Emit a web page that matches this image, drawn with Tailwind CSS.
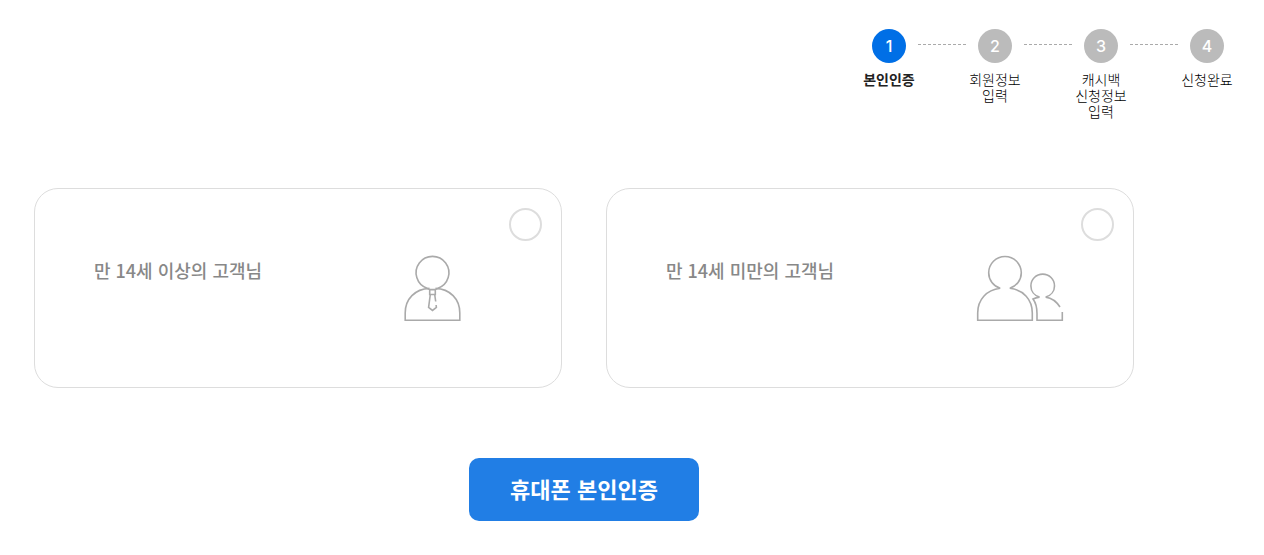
<!DOCTYPE html>
<html lang="ko">
<head>
<meta charset="utf-8">
<meta name="viewport" content="width=device-width, initial-scale=1">
<title>본인인증</title>
<script src="https://cdn.jsdelivr.net/npm/@tailwindcss/browser@4"></script>
</head>
<body class="bg-white font-['Noto_Sans_CJK_KR',sans-serif] text-[#222]">
<header class="flex justify-end pt-[29px] pr-1">
  <ol class="flex min-h-[95px] text-center text-sm leading-4 font-light text-black">
    <li class="relative flex w-[106px] flex-col items-center gap-2 font-bold" aria-current="step">
      <span class="flex size-[34px] items-center justify-center rounded-full bg-[#006fe6] font-['Inter',sans-serif] text-base font-medium text-white">1</span>
      <span class="text-[#222]">본인인증</span>
      <svg class="absolute top-[15px] left-[82px]" width="50" height="1" aria-hidden="true"><path d="M0 .5H50" stroke="#aaa" stroke-dasharray="3 2"/></svg>
    </li>
    <li class="relative flex w-[106px] flex-col items-center gap-2">
      <span class="flex size-[34px] items-center justify-center rounded-full bg-[#bbb] font-['Inter',sans-serif] text-base font-medium text-white">2</span>
      <span>회원정보<br>입력</span>
      <svg class="absolute top-[15px] left-[82px]" width="50" height="1" aria-hidden="true"><path d="M0 .5H50" stroke="#aaa" stroke-dasharray="3 2"/></svg>
    </li>
    <li class="relative flex w-[106px] flex-col items-center gap-2">
      <span class="flex size-[34px] items-center justify-center rounded-full bg-[#bbb] font-['Inter',sans-serif] text-base font-medium text-white">3</span>
      <span>캐시백<br>신청정보<br>입력</span>
      <svg class="absolute top-[15px] left-[82px]" width="50" height="1" aria-hidden="true"><path d="M0 .5H50" stroke="#aaa" stroke-dasharray="3 2"/></svg>
    </li>
    <li class="flex w-[106px] flex-col items-center gap-2">
      <span class="flex size-[34px] items-center justify-center rounded-full bg-[#bbb] font-['Inter',sans-serif] text-base font-medium text-white">4</span>
      <span>신청완료</span>
    </li>
  </ol>
</header>
<main class="pt-16 pr-[130px] pb-8 pl-[34px]">
  <form>
    <div class="grid grid-cols-2 gap-11">
      <label for="over14" class="relative flex min-h-[200px] items-center justify-between rounded-3xl border border-[#ddd] pr-[69px] pl-[59px] text-lg font-medium text-[#888]">
        <span class="pb-9">만 14세 이상의 고객님</span>
        <input id="over14" name="age" type="radio" class="absolute top-[19px] right-[19px] size-[33px] appearance-none rounded-full border-2 border-[#ddd] bg-white checked:border-[#217ee5]">
        <svg class="overflow-visible" width="88" height="64" viewBox="0 0 88 64" fill="none" stroke="#aaa" stroke-width="1.6" aria-hidden="true">
          <path d="M23 32.2A16.4 16.4 0 1 1 34 32.2"/>
          <path d="M25.5 32.4C11 33 1.2 43 1.2 57V64.3H55.8V57C55.8 43 46 33 31.5 32.4"/>
          <path d="M23 32.2L26 33.6H31L34 32.2M25.7 33.5V38.5H31.3V33.5M26.3 38.5L24.6 51.5L28.5 54.5L32.4 51.5L32.1 49M30.7 38.5L31.7 45.5"/>
        </svg>
      </label>
      <label for="under14" class="relative flex min-h-[200px] items-center justify-between rounded-3xl border border-[#ddd] pr-[69px] pl-[59px] text-lg font-medium text-[#888]">
        <span class="pb-9">만 14세 미만의 고객님</span>
        <input id="under14" name="age" type="radio" class="absolute top-[19px] right-[19px] size-[33px] appearance-none rounded-full border-2 border-[#ddd] bg-white checked:border-[#217ee5]">
        <svg class="overflow-visible" width="88" height="64" viewBox="0 0 88 64" fill="none" stroke="#aaa" stroke-width="1.6" aria-hidden="true">
          <path d="M33.8 32.3C40.5 30.3 45.3 24 45.3 16.8A16.3 16.3 0 1 0 12.7 16.8C12.7 24 17.5 30.3 24.2 32.3C10.5 34 1.7 43.5 1.7 57V64.3H56.3V57C56.3 43.5 47.5 34 33.8 32.3Z"/>
          <path d="M84 51C80.5 45.5 76 42.1 69.7 41.1C75 39.5 78.5 35 78.5 29.9A11.8 11.8 0 1 0 54.9 29.9C54.9 35 58.3 39.5 63.5 41.1C61.2 41.4 59 42 57 43C60 47 61 52 61 57.5V64.3H86.3V56"/>
        </svg>
      </label>
    </div>
    <div class="mt-[70px] flex justify-center">
      <button type="button" class="flex h-[63px] w-[230px] items-center justify-center rounded-[10px] bg-[#217ee5] pb-[3px] text-[22px] font-bold text-white">휴대폰 본인인증</button>
    </div>
  </form>
</main>
</body>
</html>
